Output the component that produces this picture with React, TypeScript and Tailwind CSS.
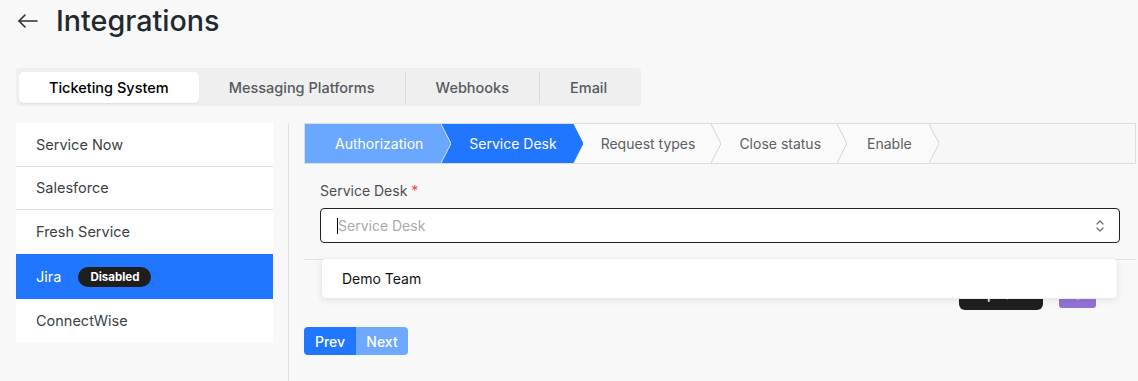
import React from "react";

const tabs = ["Ticketing System", "Messaging Platforms", "Webhooks", "Email"];
const systems = ["Service Now", "Salesforce", "Fresh Service", "Jira", "ConnectWise"];

const Chevron = ({ fill, stroke, bg }: { fill: string; stroke: string; bg: string }) => (
  <div className={`h-full w-[10px] shrink-0 ${bg}`}>
    <svg width="10" height="39" viewBox="0 0 10 39" className="block">
      <polygon points="0,0 10,19.5 0,39" fill={fill} />
      <polyline points="0,0 10,19.5 0,39" fill="none" stroke={stroke} strokeWidth="1" />
    </svg>
  </div>
);

const Stepper = () => {
  return (
    <div className="flex h-[41px] items-stretch border border-[#dcdcdc] bg-[#f7f7f7] text-[14px]">
      <div className="flex items-center bg-[#6aa7ff] pl-[30px] pr-[18px] text-white">Authorization</div>
      <Chevron fill="#6aa7ff" stroke="#d6e5ff" bg="bg-[#2176ff]" />
      <div className="flex items-center bg-[#2176ff] pl-[18px] pr-[16px] text-white">Service Desk</div>
      <Chevron fill="#2176ff" stroke="#2176ff" bg="bg-[#fafafa]" />
      <div className="flex items-center bg-[#fafafa] pl-[18px] pr-[16px] text-[#5b5f66]">Request types</div>
      <Chevron fill="#fafafa" stroke="#d4d4d4" bg="bg-[#fafafa]" />
      <div className="flex items-center bg-[#fafafa] pl-[18px] pr-[16px] text-[#5b5f66]">Close status</div>
      <Chevron fill="#fafafa" stroke="#d4d4d4" bg="bg-[#fafafa]" />
      <div className="flex items-center bg-[#fafafa] pl-[20px] pr-[17px] text-[#5b5f66]">Enable</div>
      <Chevron fill="#fafafa" stroke="#d4d4d4" bg="bg-[#f7f7f7]" />
    </div>
  );
};

const rowClass = (s: string) => {
  if (s === "Jira") return "flex h-[45px] items-center gap-[17px] bg-[#2176ff] pl-[20px] text-[14.5px] text-white";
  if (s === "ConnectWise") return "flex h-[43px] items-center pl-[20px] text-[14.5px] text-[#3b3f45]";
  if (s === "Fresh Service") return "flex h-[44px] items-center pl-[20px] text-[14.5px] text-[#3b3f45]";
  if (s === "Salesforce") return "flex h-[43px] items-center border-b border-[#dedede] pl-[20px] text-[14.5px] text-[#3b3f45]";
  return "flex h-[44px] items-center border-b border-[#dedede] pl-[20px] text-[14.5px] text-[#3b3f45]";
};

export default function App() {
  return (
    <div className="h-[381px] w-[1138px] overflow-hidden bg-[#f8f8f8] font-['Inter',sans-serif] text-[#1f2a30]">
      <div className="mt-[4px] flex h-[34px] items-center pl-[18px]">
        <svg width="20" height="14" viewBox="0 0 20 14" className="mr-[18px]" fill="none" stroke="#2b2f33" strokeWidth="1.6" strokeLinecap="round" strokeLinejoin="round">
          <path d="M1 7H19" />
          <path d="M7 1L1 7L7 13" />
        </svg>
        <h1 className="text-[28.7px] leading-[34px] font-medium">Integrations</h1>
      </div>

      <div className="ml-[16px] mt-[30px] flex w-fit items-center whitespace-nowrap rounded-[4px] bg-[#efefef] pl-[3px] pr-[4px] pt-[4px] pb-[3px]">
        {tabs.map((t, i) => (
          <div key={t} className="flex items-center">
            {i > 1 && <div className="h-[31px] w-px bg-[#dadada]" />}
            <div
              className={
                i === 0
                  ? "rounded-[5px] bg-white px-[30px] py-[5px] text-[14.5px] leading-[21px] font-medium text-black shadow-[0_1px_2px_rgba(0,0,0,0.06)]"
                  : "px-[30px] py-[5px] text-[14.5px] leading-[21px] font-medium text-[#555a5f]"
              }
            >
              {t}
            </div>
          </div>
        ))}
      </div>

      <div className="mt-[17px] flex">
        <div className="ml-[16px] w-[257px] self-start bg-white">
          {systems.map((s) => (
            <div key={s} className={rowClass(s)}>
              {s}
              {s === "Jira" && (
                <span className="rounded-full bg-[#1e1e1e] px-[12px] py-[2px] text-[11.5px] leading-[16px] font-bold text-white">Disabled</span>
              )}
            </div>
          ))}
        </div>

        <div className="ml-[15px] h-[258px] w-px bg-[#dfe1e4]" />

        <div className="ml-[15px] w-[832px]">
          <Stepper />

          <div className="relative">
            <div className="px-[16px] pt-[17px]">
              <div className="text-[14px] leading-[20px] text-[#4a4e54]">
                Service Desk <span className="text-[#e5484d]">*</span>
              </div>
              <div className="mt-[7px] flex h-[35px] items-center rounded-[4px] border border-[#222] bg-white pl-[16px] pr-[14px]">
                <div className="h-[16px] w-px bg-black" />
                <span className="flex-1 text-[14px] text-[#a9abae]">Service Desk</span>
                <svg width="10" height="14" viewBox="0 0 10 14" fill="none" stroke="#6b6f75" strokeWidth="1.3" strokeLinecap="round" strokeLinejoin="round">
                  <path d="M2 5L5 2L8 5" />
                  <path d="M2 9L5 12L8 9" />
                </svg>
              </div>
            </div>

            <div className="mt-[16px] h-px bg-[#e0e0e0]" />

            <div className="mt-[17px] flex justify-end gap-[16px] pr-[40px]">
              <button className="h-[33px] w-[84px] rounded-[6px] bg-[#1f1f1f] text-[14px] font-medium text-white">Update</button>
              <button className="mt-[3px] flex h-[28px] w-[37px] items-center justify-center rounded-[3px] bg-[#9271d6]">
                <svg width="14" height="14" viewBox="0 0 24 24" fill="none" stroke="white" strokeWidth="2.5">
                  <circle cx="12" cy="12" r="8" />
                </svg>
              </button>
            </div>

            <div className="absolute left-[17px] right-[18px] top-[94px] flex h-[41px] items-center rounded-[5px] border border-[#ececec] bg-white pl-[20px] text-[14px] text-[#111] shadow-[0_2px_6px_rgba(0,0,0,0.08)]">
              Demo Team
            </div>
          </div>

          <div className="mt-[17px] flex">
            <button className="h-[28px] w-[52px] rounded-l-[4px] bg-[#2176ff] text-[14px] font-medium text-white">Prev</button>
            <button className="h-[28px] w-[52px] rounded-r-[4px] bg-[#6ea8ff] text-[14px] font-medium text-white">Next</button>
          </div>
        </div>
      </div>
    </div>
  );
}
